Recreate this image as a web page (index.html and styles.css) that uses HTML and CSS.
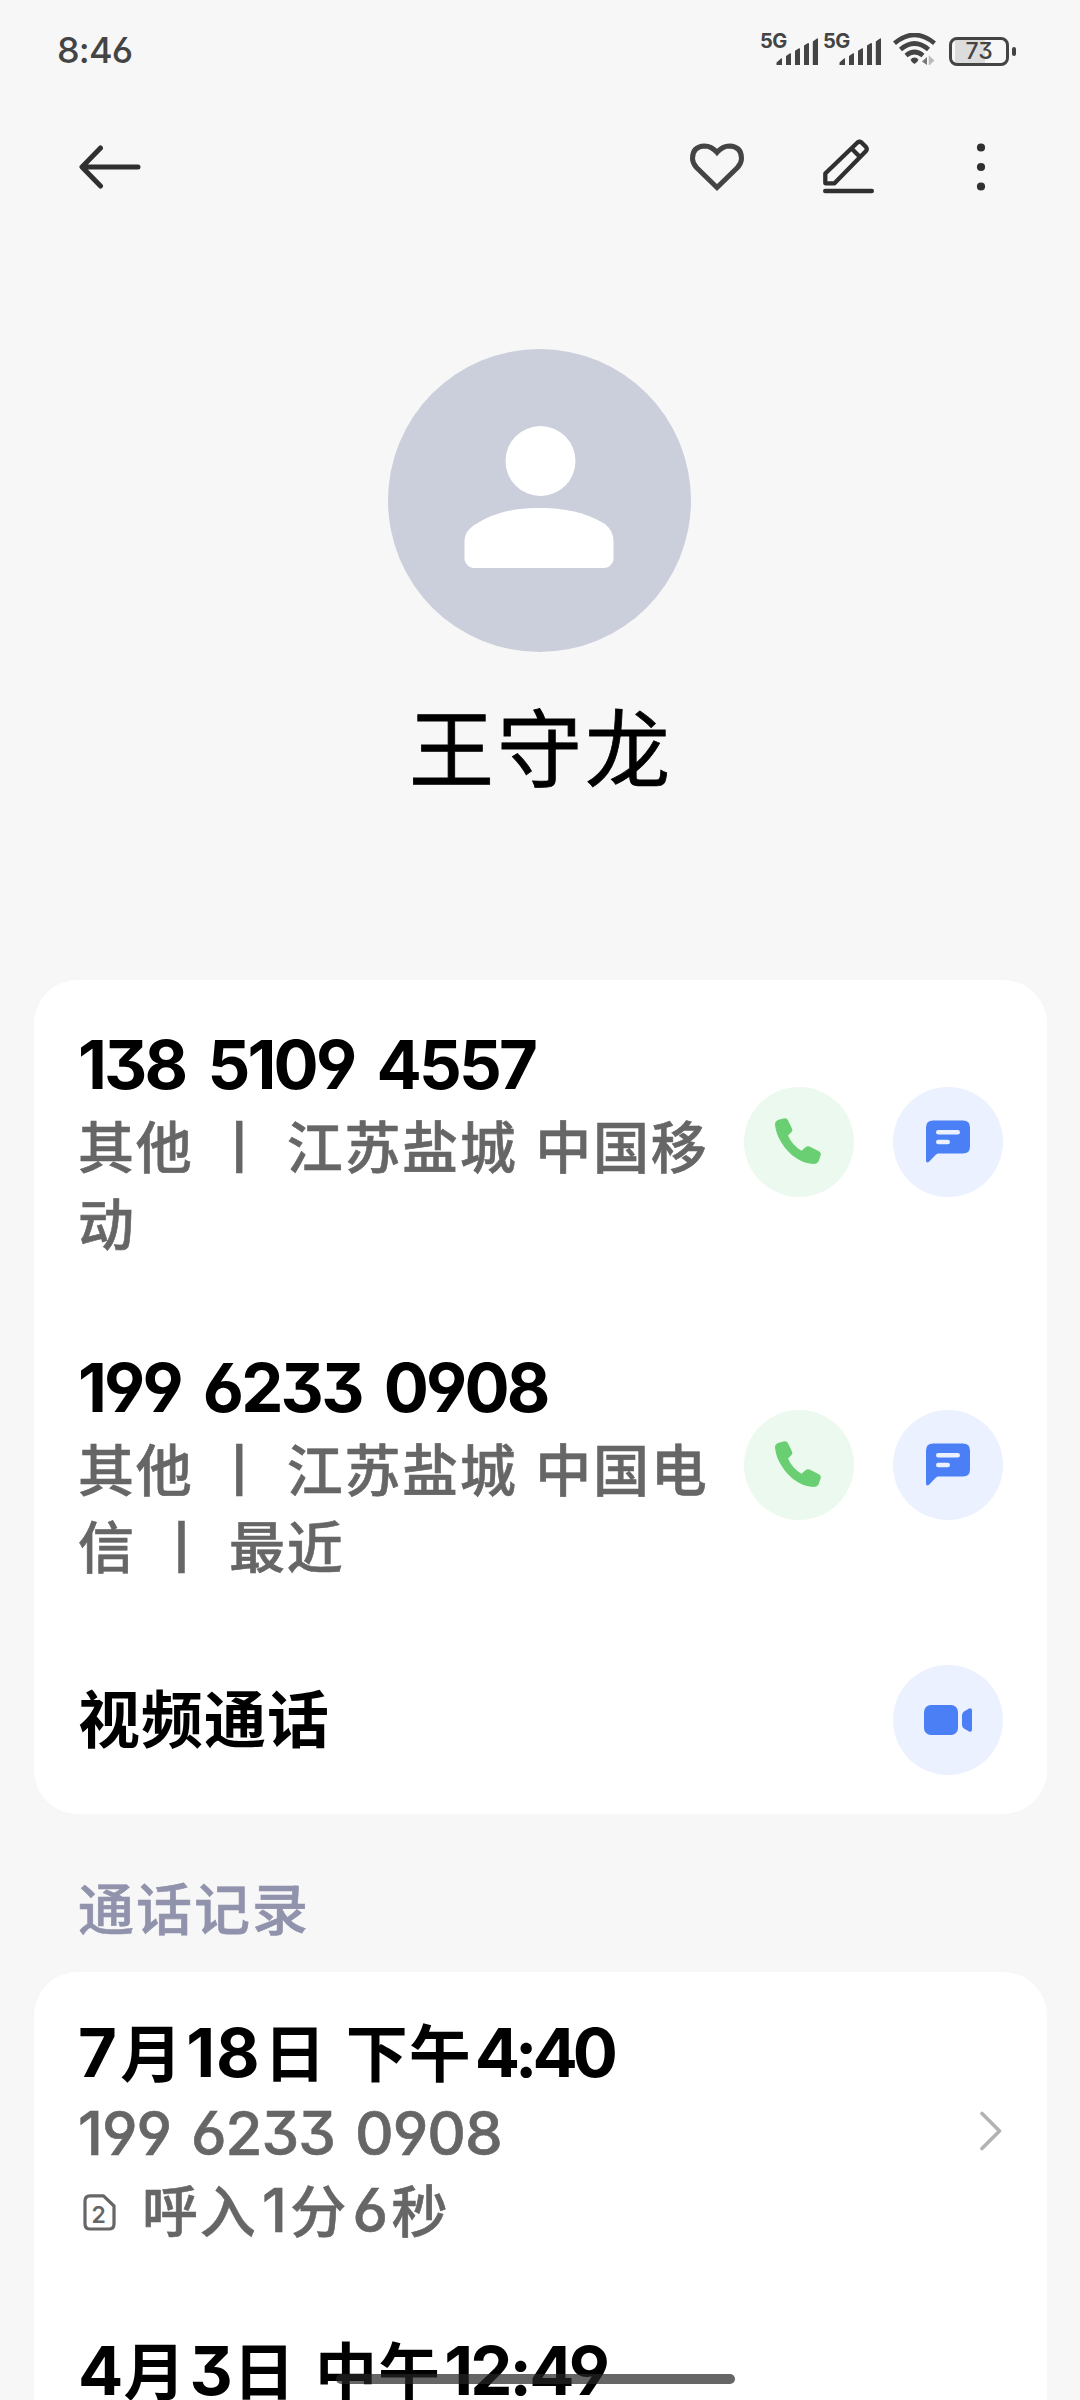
FILE: index.html
```html
<!DOCTYPE html>
<html lang="zh-CN">
<head>
<meta charset="utf-8">
<title>王守龙</title>
<link rel="stylesheet" href="styles.css">
</head>
<body>
<svg class="defs" width="0" height="0" aria-hidden="true">
  <symbol id="signal" viewBox="0 0 42 27">
    <path d="M0.5 27V24.5L5 20.5Q6 20 6 21V27ZM10 27V18L14 15.3Q15 15 15 16V27ZM19 27V12.700L23 10.200Q24 10 24 11V27ZM28 27V7.500L32 5Q33 4.800 33 6V27ZM36.800 27V3.500L41 0.400Q42 0 42 1V27Z" fill="#444"/>
  </symbol>
  <symbol id="call" viewBox="0 0 48 48">
    <path d="M4.500 1.500 9.500 0.300Q11.500 0 12.700 1.800L17 10.500Q18 12.500 16.500 14L13 17.500Q17 27 26.500 32.700L30.500 29.200Q32.500 27.700 34.500 28.600L44 33.200Q46.500 34.700 45.800 37L43.500 43.500Q42 46 38.500 46C18 45 1 23 0 6Q0 2.800 4.500 1.500Z" fill="#6acf73"/>
  </symbol>
  <symbol id="message" viewBox="0 0 44 44">
    <path d="M7 0.500H37Q44 0.500 44 7.500V26.500Q44 33.500 37 33.500H12.500Q11 33.500 10 34.500L3 41.800Q0.500 43.500 0 41V7.500Q0 0.500 7 0.500Z" fill="#4a7ff5"/>
    <path d="M12.300 12.200H31.700M12.300 22H21.700" stroke="#ebf1fe" stroke-width="4.600" stroke-linecap="round"/>
  </symbol>
</svg>
<div class="screen">
  <header class="status">
    <span class="clock">8:46</span>
    <div class="indicators">
      <div class="cell"><span class="net">5G</span><svg width="42" height="27"><use href="#signal"/></svg></div>
      <div class="cell"><span class="net">5G</span><svg width="42" height="27"><use href="#signal"/></svg></div>
      <svg class="wifi" width="43" height="33" viewBox="0 0 43 33" fill="none" stroke="#444">
        <path d="M1.500 10.300Q21.500 -6.500 41.500 10.300M7.500 16.500Q21.500 4.500 35.500 16.500M13 22.500Q21.500 15.500 30 22.500" stroke-width="4.600"/>
        <path d="M21.500 24.500q2.500 0 4 2.200-1.500 3.300-4 4.300-2.500-1-4-4.300 1.500-2.200 4-2.200z" fill="#444" stroke="none"/>
        <path d="M29 28.500 34 24V32Z" fill="#777" stroke="none"/>
        <path d="M36.500 32V24L41 28" fill="#bbb" stroke="#bbb" stroke-width="1.500"/>
      </svg>
      <div class="battery"><div class="level">73</div><i class="nub"></i></div>
    </div>
  </header>

  <nav class="toolbar">
    <svg width="62" height="44" viewBox="0 0 62 44" fill="none" stroke="#303030" stroke-width="5" stroke-linecap="round" stroke-linejoin="round"><path d="M59 22H4M21.500 3 3 22 21.500 41"/></svg>
    <div class="tools">
      <svg width="54" height="48" viewBox="0 0 54 48" fill="none" stroke="#444" stroke-width="5"><path d="M27 9.500Q21.500 3 14.500 3 2.500 3.500 2.500 15.500 2.500 20 6.500 24.500L27 44.500 47.500 24.500Q51.500 20 51.500 15.500 51.500 3.500 39.500 3 32.500 3 27 9.500Z"/></svg>
      <svg width="52" height="56" viewBox="0 0 52 56" fill="none" stroke="#303030" stroke-width="4.300" stroke-linejoin="round"><path d="M2.300 44.300V34.500L34.500 3.500Q36.500 2 38.500 3.500L43 8Q44.500 10 43 12L11.500 44.300ZM28.500 9.500 36.500 17.500"/><path d="M2.300 52H48.700" stroke-width="4.600" stroke-linecap="round"/></svg>
      <svg width="10" height="48" viewBox="0 0 10 48" fill="#303030"><circle cx="5" cy="4.500" r="4.100"/><circle cx="5" cy="24" r="4.100"/><circle cx="5" cy="43.500" r="4.100"/></svg>
    </div>
  </nav>

  <section class="profile">
    <svg width="303" height="303" viewBox="0 0 303 303"><circle cx="151.500" cy="151.500" r="151.500" fill="#cbcedb"/><circle cx="152.500" cy="112" r="35" fill="#fff"/><path d="M76.500 192Q76.500 183 85.500 176.500C108 162 128 159 151.500 159S195 162 217 175Q225.500 182 225.500 192V211Q223.500 218 216.500 219H85.500Q78.500 218 76.500 211Z" fill="#fff"/></svg>
    <h1 class="name">王守龙</h1>
  </section>

  <section class="card">
    <div class="row phone">
      <div class="info"><p class="title number">138 5109 4557</p><p class="sub">其他 丨 江苏盐城 中国移动</p></div>
      <div class="actions">
        <button class="round green"><svg width="48" height="48"><use href="#call"/></svg></button>
        <button class="round blue"><svg width="44" height="44"><use href="#message"/></svg></button>
      </div>
    </div>
    <div class="row phone">
      <div class="info"><p class="title number">199 6233 0908</p><p class="sub">其他 丨 江苏盐城 中国电信 丨 最近</p></div>
      <div class="actions">
        <button class="round green"><svg width="48" height="48"><use href="#call"/></svg></button>
        <button class="round blue"><svg width="44" height="44"><use href="#message"/></svg></button>
      </div>
    </div>
    <div class="row video">
      <p class="title">视频通话</p>
      <button class="round blue"><svg width="48" height="32" viewBox="0 0 48 32" fill="#4a7ff5"><rect x="0" y="1" width="34" height="30" rx="7"/><path d="M38 11Q38 9 40 7.500L45 4.500Q48 3.500 48 6.500V25.500Q48 28.500 45 27.500L40 24.500Q38 23 38 21Z"/></svg></button>
    </div>
  </section>

  <h2 class="section-title">通话记录</h2>

  <section class="card log">
    <div class="row call">
      <div class="info">
        <p class="title date"><span class="n seven">7</span>月<span class="n teen">18</span>日 下午<span class="n tight">4:40</span></p>
        <p class="sub number">199 6233 0908</p>
        <p class="sub detail"><svg width="33" height="37" viewBox="0 0 33 37"><path d="M7 1.800H20.500L31 12V30Q31 35 26 35H7Q2 35 2 30V7Q2 1.800 7 1.800Z" fill="none" stroke="#666" stroke-width="3.200" stroke-linejoin="round"/><text class="sim" x="16.500" y="28.500" text-anchor="middle">2</text></svg><span>呼入<span class="n">1</span>分<span class="n">6</span>秒</span></p>
      </div>
      <svg width="24" height="40" viewBox="0 0 24 40" fill="none" stroke="#b2b2b2" stroke-width="3.600" stroke-linecap="round" stroke-linejoin="round"><path d="M3 2.500 20.500 20 3 37.500"/></svg>
    </div>
    <div class="row call">
      <div class="info"><p class="title date"><span class="n">4</span>月<span class="n">3</span>日 中午<span class="n">12:49</span></p></div>
    </div>
  </section>
  <div class="home-bar"></div>
</div>
</body>
</html>
```
FILE: styles.css
```css
* { box-sizing: border-box; margin: 0; padding: 0; }
body { background: #f7f7f7; font-family: "Noto Sans CJK SC", sans-serif; color: #000; }
.defs { position: absolute; }
.screen { position: relative; width: 1080px; height: 2400px; overflow: hidden; display: flex; flex-direction: column; }
.screen > * { flex: none; }
.clock, .net, .level, .number, .n, .sim { font-family: Inter, sans-serif; font-feature-settings: "cv03", "cv04", "cv09"; }

.status { height: 100px; padding: 0 64px 0 57px; display: flex; justify-content: space-between; align-items: center; color: #444; }
.clock { font-size: 36px; font-weight: 500; line-height: 44px; letter-spacing: -0.800px; }
.indicators { display: flex; align-items: flex-end; height: 32px; }
.cell { display: flex; align-items: flex-end; width: 57px; margin-right: 6px; height: 31px; padding-bottom: 1px; }
.net { font-size: 20px; font-weight: 700; letter-spacing: -0.500px; line-height: 15px; width: 15px; height: 31px; margin-left: -1px; margin-right: 1px; white-space: nowrap; }
.cell svg { flex: none; }
.wifi { margin: 0 13px 0 6px; }
.battery { display: flex; align-items: center; height: 30px; }
.level { width: 60px; height: 29px; border: 3.500px solid #444; border-radius: 8px; font-size: 23px; font-weight: 500; line-height: 22px; text-align: center; background: linear-gradient(90deg, transparent 3px, #dcdcdc 3px, #dcdcdc 33px, transparent 33px); }
.nub { width: 4px; height: 9px; margin-left: 3px; border-radius: 2px; background: #444; }

.toolbar { height: 133px; padding: 0 94px 0 79px; display: flex; justify-content: space-between; align-items: center; }
.tools { display: flex; align-items: center; gap: 79px; }
.tools svg:last-child { margin-left: 22px; }

.profile { height: 747px; padding: 116px 1px 0 0; display: flex; flex-direction: column; align-items: center; }
.profile svg { display: block; }
.name { margin-top: 29px; font-size: 85px; line-height: 126px; font-weight: 400; letter-spacing: 3px; padding-left: 3px; -webkit-text-stroke: 0.800px #000; }

.card { margin: 0 33px 0 34px; padding: 0 44px; background: #fff; border-radius: 44px; }
.row { display: flex; align-items: center; justify-content: space-between; }
.phone { height: 323px; }
.video { height: 188px; }
.info { flex: 0 1 644px; }
.title { font-size: 62px; font-weight: 700; line-height: 89px; letter-spacing: 1px; }
.title.number, .date .n { font-size: 67px; letter-spacing: -2.800px; }
.title.number { word-spacing: 9px; }
.video .title { margin-bottom: 7px; }
.sub { font-size: 56px; font-weight: 500; line-height: 77px; letter-spacing: 1.700px; word-spacing: 3.500px; color: #666; -webkit-text-stroke: 0.600px #666; }
.phone .sub { margin: -4px 0 4px; }
.sub.number, .sub .n { font-size: 60px; letter-spacing: -1px; }
.sub.number { word-spacing: 5px; }
.actions { display: flex; gap: 39px; }
.round { width: 110px; height: 110px; border: 0; border-radius: 50%; display: flex; align-items: center; justify-content: center; }
.green { background: #ecf9ef; }
.blue { background: #ebf1fe; }

.section-title { height: 158px; padding: 53px 0 0 78px; font-size: 56px; line-height: 77px; font-weight: 500; letter-spacing: 2px; color: #9193ac; -webkit-text-stroke: 0.600px #9193ac; }

.log { height: 428px; border-radius: 44px 44px 0 0; }
.call { height: 318px; align-items: flex-start; padding-top: 36px; }
.call > svg { align-self: center; margin-top: -36px; }
.date { line-height: 85px; word-spacing: 4px; }
.date .n { margin: 0 3px; }
.date .n:first-child { margin-left: 0; }
.date .seven { margin-right: 6px; }
.date .teen { letter-spacing: 1px; }
.date .tight { letter-spacing: -5px; }
.detail { display: flex; align-items: center; gap: 26px; padding-left: 5px; height: 77px; }
.detail svg { margin-top: 4px; }
.detail > span { margin-bottom: 4px; }
.detail .n { margin: 0 4.500px; }
.sim { font-size: 23px; font-weight: 600; fill: #666; -webkit-text-stroke: 0; }
.home-bar { position: absolute; left: 336px; top: 2374px; width: 399px; height: 10px; border-radius: 5px; background: rgba(37, 37, 37, 0.7); }
```
